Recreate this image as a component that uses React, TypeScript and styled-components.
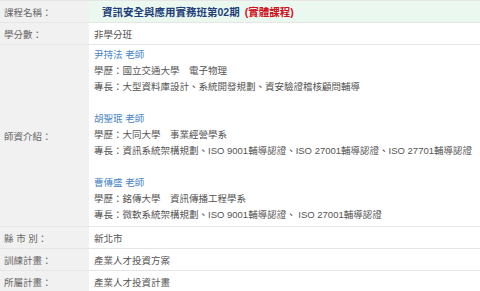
import React from "react";
import styled, { createGlobalStyle } from "styled-components";

const Global = createGlobalStyle`
  html, body { margin: 0; padding: 0; background: #fff; }
  body { font-family: "Liberation Sans", "Noto Sans CJK TC", sans-serif; }
`;

const Table = styled.div`
  display: grid;
  grid-template-columns: 89px 1fr;
  width: 480px;
  border-top: 1px solid #e6e6e6;
  font-size: 9.5px;
  color: #555;
`;

const Label = styled.div`
  display: flex;
  align-items: center;
  background: #f1f1f1;
  color: #666;
  padding-left: 4px;
  min-height: 21px;
  border-bottom: 1px solid #e6e6e6;
  white-space: pre;
`;

const Value = styled.div<{ $green?: boolean }>`
  display: flex;
  align-items: center;
  min-height: 21px;
  padding-left: 5px;
  background: ${(p) => (p.$green ? "#ebf8ef" : "#fff")};
  border-bottom: 1px solid #e6e6e6;
  color: #555;
`;

const Title = styled.span`
  padding-left: 8px;
  font-size: 10.5px;
  font-weight: bold;
  color: #1f3f7a;
`;

const Tag = styled.span`
  color: #d0101e;
  margin-left: 5px;
`;

const Teachers = styled.div`
  padding: 2px 0 3px 5px;
  line-height: 16px;
  border-bottom: 1px solid #e6e6e6;
`;

const Teacher = styled.div`
  & + & { margin-top: 16px; }
`;

const Name = styled.div`
  color: #4a86c5;
`;

const Line = styled.div`
  white-space: pre;
`;

const teachers = [
  {
    name: "尹持法 老師",
    edu: "學歷：國立交通大學　電子物理",
    spec: "專長：大型資料庫設計、系統開發規劃、資安驗證稽核顧問輔導",
  },
  {
    name: "胡聖珉 老師",
    edu: "學歷：大同大學　事業經營學系",
    spec: "專長：資訊系統架構規劃、ISO 9001輔導認證、ISO 27001輔導認證、ISO 27701輔導認證",
  },
  {
    name: "曹傳盛 老師",
    edu: "學歷：銘傳大學　資訊傳播工程學系",
    spec: "專長：微軟系統架構規劃、ISO 9001輔導認證、 ISO 27001輔導認證",
  },
];

export default function App() {
  return (
    <>
      <Global />
      <Table>
        <Label>課程名稱：</Label>
        <Value $green>
          <Title>
            資訊安全與應用實務班第02期<Tag>(實體課程)</Tag>
          </Title>
        </Value>
        <Label>學分數：</Label>
        <Value>非學分班</Value>
        <Label>師資介紹：</Label>
        <Teachers>
          {teachers.map((t) => (
            <Teacher key={t.name}>
              <Name>{t.name}</Name>
              <Line>{t.edu}</Line>
              <Line>{t.spec}</Line>
            </Teacher>
          ))}
        </Teachers>
        <Label>縣 市 別：</Label>
        <Value>新北市</Value>
        <Label>訓練計畫：</Label>
        <Value>產業人才投資方案</Value>
        <Label>所屬計畫：</Label>
        <Value>產業人才投資計畫</Value>
      </Table>
    </>
  );
}
